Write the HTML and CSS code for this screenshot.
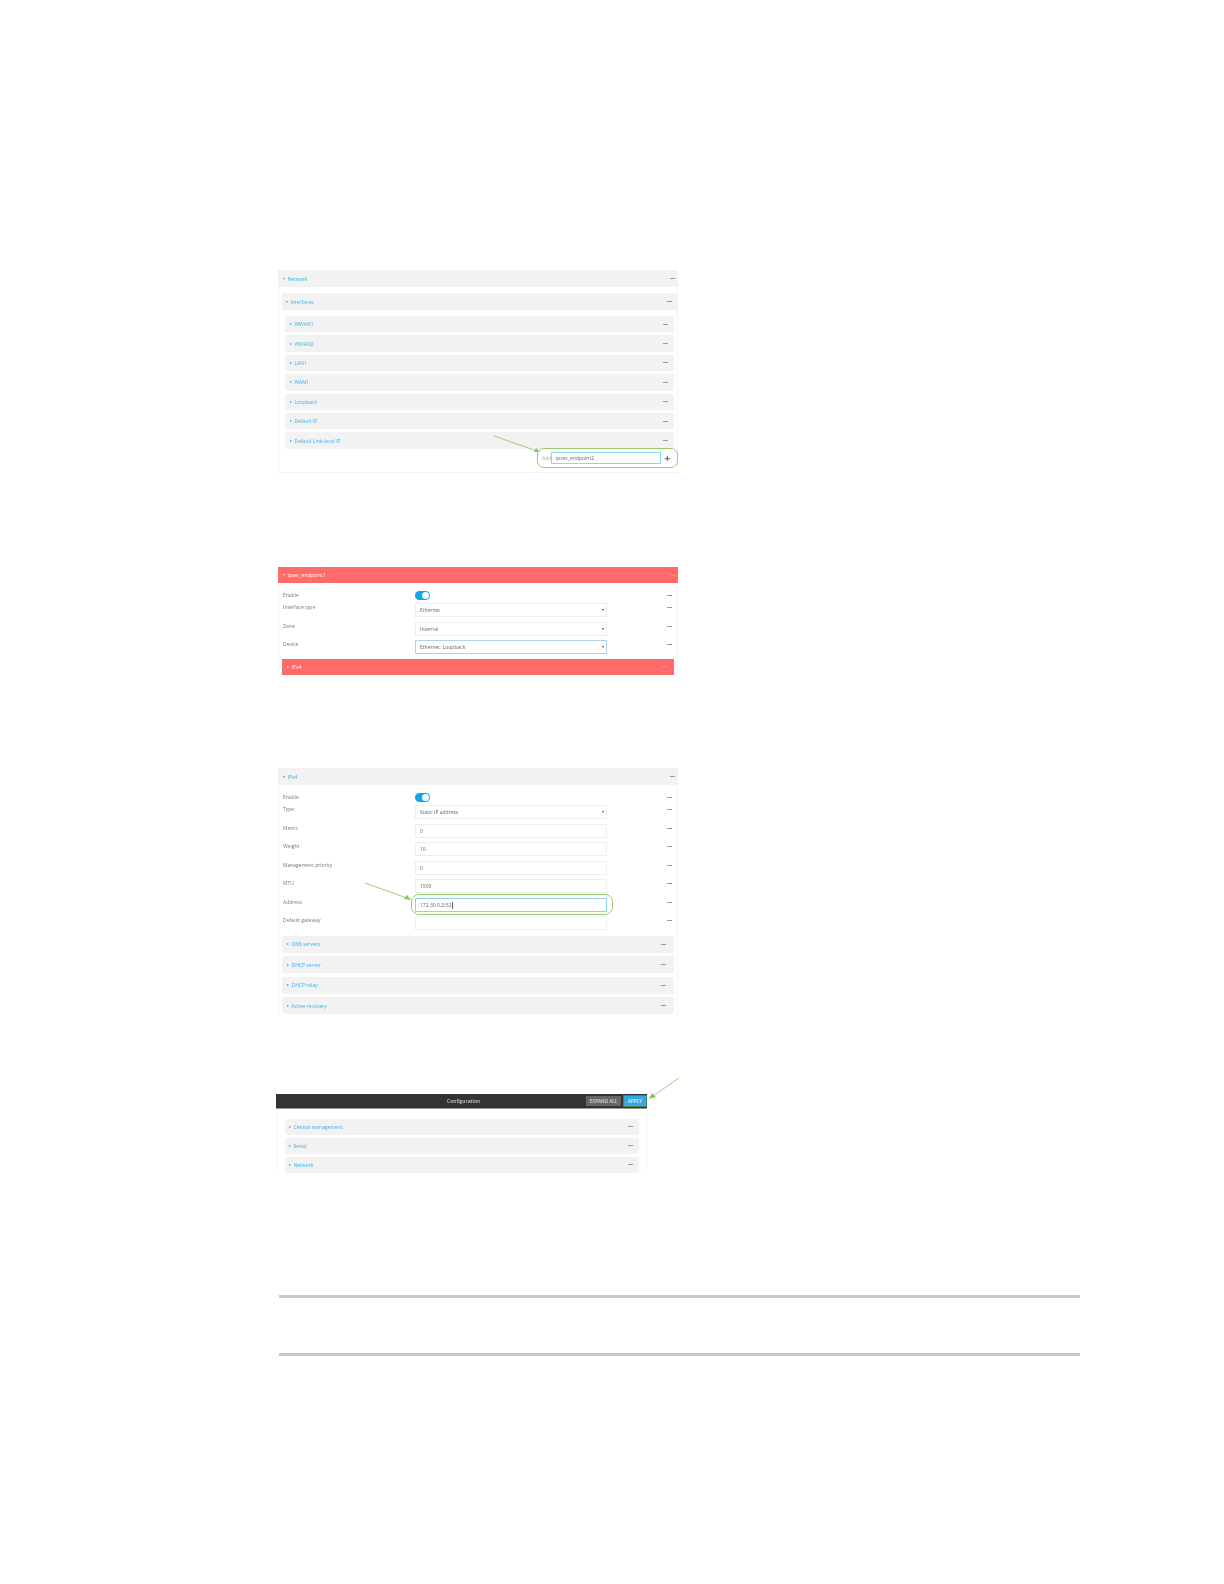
FILE: index.html
```html
<!DOCTYPE html>
<html lang="en">
<head>
  <meta charset="UTF-8" />
  <title>IPsec endpoint configuration</title>
  <link rel="stylesheet" href="styles.css">
</head>
<body>
  <main class="page">

    <!-- Add interface -->
    <section class="shot shot-add">
      <div class="bar bar-top"><span class="title"><i class="tri down"></i>Network</span><i class="dash"></i></div>
      <div class="panel">
        <div class="bar bar-sub"><span class="title"><i class="tri down"></i>Interfaces</span><i class="dash"></i></div>
        <div class="rows">
          <div class="bar bar-row"><span class="title"><i class="tri"></i>WWAN1</span><i class="dash"></i></div>
          <div class="bar bar-row"><span class="title"><i class="tri"></i>WWAN2</span><i class="dash"></i></div>
          <div class="bar bar-row"><span class="title"><i class="tri"></i>LAN1</span><i class="dash"></i></div>
          <div class="bar bar-row"><span class="title"><i class="tri"></i>WAN1</span><i class="dash"></i></div>
          <div class="bar bar-row"><span class="title"><i class="tri"></i>Loopback</span><i class="dash"></i></div>
          <div class="bar bar-row"><span class="title"><i class="tri"></i>Default IP</span><i class="dash"></i></div>
          <div class="bar bar-row"><span class="title"><i class="tri"></i>Default Link-local IP</span><i class="dash"></i></div>
        </div>
        <div class="add-line">
          <div class="add-box">
            <span class="add-label">Add</span>
            <span class="input focus add-input">ipsec_endpoint2</span>
            <span class="plus">+</span>
          </div>
        </div>
      </div>
      <svg class="arrow arrow-add" width="60" height="30" viewBox="0 0 60 30"><path d="M2 2 L45 17" /><path class="head" d="M48 18 L42 18 L44 14 Z" /></svg>
    </section>

    <!-- Interface settings -->
    <section class="shot shot-iface">
      <div class="bar bar-red"><span class="title"><i class="tri down"></i>ipsec_endpoint1</span><i class="dash"></i></div>
      <div class="form">
        <div class="field field-toggle"><label>Enable</label><span class="toggle"></span><i class="dash"></i></div>
        <div class="field"><label>Interface type</label><span class="input select">Ethernet</span><i class="dash"></i></div>
        <div class="field"><label>Zone</label><span class="input select">Internal</span><i class="dash"></i></div>
        <div class="field"><label>Device</label><span class="input select focus-soft">Ethernet: Loopback</span><i class="dash"></i></div>
      </div>
      <div class="bar bar-red bar-red-sub"><span class="title"><i class="tri"></i>IPv4</span><i class="dash"></i></div>
    </section>

    <!-- IPv4 settings -->
    <section class="shot shot-ipv4">
      <div class="bar bar-top"><span class="title"><i class="tri down"></i>IPv4</span><i class="dash"></i></div>
      <div class="form">
        <div class="field field-toggle"><label>Enable</label><span class="toggle"></span><i class="dash"></i></div>
        <div class="field"><label>Type</label><span class="input select">Static IP address</span><i class="dash"></i></div>
        <div class="field"><label>Metric</label><span class="input">0</span><i class="dash"></i></div>
        <div class="field"><label>Weight</label><span class="input">10</span><i class="dash"></i></div>
        <div class="field"><label>Management priority</label><span class="input">0</span><i class="dash"></i></div>
        <div class="field"><label>MTU</label><span class="input">1500</span><i class="dash"></i></div>
        <div class="field"><label>Address</label><span class="input focus">172.30.0.2/32<b class="caret"></b></span><i class="dash"></i></div>
        <div class="field"><label>Default gateway</label><span class="input"></span><i class="dash"></i></div>
      </div>
      <div class="groups">
        <div class="bar bar-group"><span class="title"><i class="tri"></i>DNS servers</span><i class="dash"></i></div>
        <div class="bar bar-group"><span class="title"><i class="tri"></i>DHCP server</span><i class="dash"></i></div>
        <div class="bar bar-group"><span class="title"><i class="tri"></i>DHCP relay</span><i class="dash"></i></div>
        <div class="bar bar-group"><span class="title"><i class="tri"></i>Active recovery</span><i class="dash"></i></div>
      </div>
      <span class="ring ring-address"></span>
      <svg class="arrow arrow-address" width="90" height="30" viewBox="0 0 90 30"><path d="M2 2 L44 17" /><path class="head" d="M48 19 L41 18 L44 14 Z" /></svg>
    </section>

    <!-- Apply -->
    <section class="shot shot-apply">
      <div class="config-bar">
        <span class="config-title">Configuration</span>
        <span class="btn btn-expand">EXPAND ALL</span>
        <span class="btn btn-apply">APPLY</span>
      </div>
      <div class="config-list">
        <div class="bar bar-config"><span class="title"><i class="tri"></i>Central management</span><i class="dash"></i></div>
        <div class="bar bar-config"><span class="title"><i class="tri"></i>Serial</span><i class="dash"></i></div>
        <div class="bar bar-config"><span class="title"><i class="tri"></i>Network</span><i class="dash"></i></div>
      </div>
      <svg class="arrow arrow-apply" width="34" height="30" viewBox="0 0 34 30"><path d="M32 2 L6 20" /><path class="head" d="M2 23 L5 17 L9 21 Z" /></svg>
    </section>

    <div class="note">
      <hr class="rule">
      <hr class="rule">
    </div>

  </main>
</body>
</html>
```

FILE: styles.css
```css
body {
  margin: 0;
  background: #fff;
  font-family: "Open Sans", "Liberation Sans", sans-serif;
  color: #777;
}
.page {
  width: 1224px;
  height: 1584px;
  overflow: hidden;
  padding-top: 270px;
  box-sizing: border-box;
}
.shot {
  position: relative;
  box-sizing: border-box;
  font-size: 5px;
  border: solid #f3f3f3;
  border-width: 0 1px;
  filter: blur(0.3px);
}
.shot-add {
  width: 400px;
  height: 203px;
  margin-left: 278px;
  border-bottom-width: 1px;
}
.shot-iface {
  width: 400px;
  height: 107px;
  margin: 94px 0 0 278px;
}
.shot-ipv4 {
  width: 400px;
  height: 249px;
  margin: 94px 0 0 278px;
}
.shot-apply {
  width: 371px;
  height: 76px;
  margin: 77px 0 0 276px;
}

/* section bars */
.bar {
  display: flex;
  align-items: center;
  justify-content: space-between;
  box-sizing: border-box;
  background: #f2f2f2;
  height: 17px;
  padding: 0 2px 0 4px;
}
.bar-top,
.bar-red {
  margin: 0 -1px;
  padding: 0 3px 0 5px;
}
.title {
  display: flex;
  align-items: center;
  gap: 2.5px;
  color: #35b2e8;
}
.tri {
  width: 0;
  height: 0;
  border-left: 2.5px solid #35a5d8;
  border-top: 1.5px solid transparent;
  border-bottom: 1.5px solid transparent;
}
.tri.down {
  border-left: 1.5px solid transparent;
  border-right: 1.5px solid transparent;
  border-top: 2.5px solid #35a5d8;
  border-bottom: 0;
}
.dash {
  width: 5px;
  height: 1px;
  background: #999;
}
.panel {
  margin: 6px 0 0 3px;
  height: 179px;
}
.bar-sub {
  border-radius: 2px 2px 0 0;
  padding-right: 5px;
}
.rows {
  display: flex;
  flex-direction: column;
  gap: 3px;
  margin: 6px 3px 0 3px;
}
.bar-row {
  height: 16.4px;
  padding: 0 6px 0 5px;
  border-radius: 2px;
}

/* add field */
.add-line {
  display: flex;
  justify-content: flex-end;
  margin-right: -1px;
}
.add-box {
  display: flex;
  align-items: center;
  box-sizing: border-box;
  width: 141px;
  height: 20px;
  padding-left: 4px;
  border: 1px solid #9ccb6e;
  border-radius: 7px;
  margin-top: -1px;
  background: #fff;
}
.add-label {
  width: 9px;
  color: #aaa;
}
.input {
  display: block;
  flex-shrink: 0;
  box-sizing: border-box;
  width: 192px;
  height: 14px;
  line-height: 12px;
  padding-left: 4px;
  border: 1px solid #eee;
  background: #fff;
  color: #666;
}
.add-input {
  width: 110px;
  height: 12px;
  line-height: 10px;
}
.focus {
  border-color: #8fd3ee;
}
.focus-soft {
  border-color: #b5cfe8;
}
.plus {
  margin-left: 1px;
  width: 11px;
  text-align: center;
  font-size: 11px;
  font-weight: 700;
  line-height: 10px;
  color: #777;
}

/* forms */
.bar-red {
  background: #ff6b6b;
  height: 16px;
}
.bar-red .title {
  color: #fff;
}
.bar-red .tri {
  border-left-color: #fff;
}
.bar-red .tri.down {
  border-left-color: transparent;
  border-top-color: #fff;
}
.bar-red .dash {
  background: #ff8c8c;
}
.bar-red-sub {
  margin: 0 3px;
  padding: 0 7px 0 5px;
}
.form {
  display: flex;
  flex-direction: column;
  padding: 8px 5px 0 4px;
}
.field {
  display: flex;
  align-items: flex-start;
  height: 18.5px;
}
.field label {
  width: 132px;
  flex-shrink: 0;
  line-height: 8px;
}
.field .dash {
  margin: 4px 0 0 auto;
}
.field-toggle {
  height: 12px;
}
.toggle {
  position: relative;
  display: block;
  width: 15px;
  height: 9px;
  border-radius: 5px;
  background: #0fa9ea;
}
.toggle::after {
  content: "";
  position: absolute;
  right: 1px;
  top: 1px;
  width: 7px;
  height: 7px;
  border-radius: 50%;
  background: #fff;
}
.select {
  position: relative;
}
.select::after {
  content: "";
  position: absolute;
  right: 2px;
  top: 5px;
  border-left: 1.5px solid transparent;
  border-right: 1.5px solid transparent;
  border-top: 2.5px solid #444;
}
.caret {
  display: inline-block;
  width: 1px;
  height: 7px;
  background: #666;
  vertical-align: middle;
}
.groups {
  display: flex;
  flex-direction: column;
  gap: 3.5px;
  margin: 1px 3px 0;
}
.bar-group {
  padding: 0 8px 0 5px;
  border-radius: 2px;
}

/* apply bar */
.config-bar {
  display: flex;
  align-items: center;
  justify-content: flex-end;
  height: 14px;
  margin: 0 -1px;
  background: #333;
  border-bottom: 1px solid #999;
  position: relative;
}
.config-title {
  position: absolute;
  left: 171px;
  color: #ccc;
  font-weight: 600;
}
.btn {
  display: block;
  height: 10px;
  line-height: 10px;
  text-align: center;
  color: #ddd;
  font-weight: 600;
  font-size: 4.6px;
}
.btn-expand {
  width: 35px;
  background: #666;
}
.btn-apply {
  width: 22px;
  margin-left: 3px;
  margin-right: 1px;
  background: #30a9e6;
  color: #e8f6fc;
  outline: 1px solid #5c7f4a;
}
.config-list {
  display: flex;
  flex-direction: column;
  gap: 3.5px;
  margin: 10px 7px 0 8px;
}
.bar-config {
  height: 15.5px;
  padding: 0 6px 0 4px;
  border-radius: 2px;
}

/* callouts */
.arrow {
  position: absolute;
  overflow: visible;
}
.arrow path {
  fill: none;
  stroke: #8cbf5a;
  stroke-width: 0.8;
}
.arrow .head {
  fill: #8cbf5a;
  stroke: none;
}
.arrow-add {
  left: 213px;
  top: 164px;
}
.arrow-address {
  left: 84px;
  top: 113px;
}
.arrow-apply {
  left: 370px;
  top: -18px;
}
.ring {
  position: absolute;
  border: 1px solid #9ccb6e;
  border-radius: 8px;
}
.ring-address {
  left: 132px;
  top: 126px;
  width: 200px;
  height: 19px;
}

/* note rules */
.note {
  width: 801px;
  margin: 125px 0 0 279px;
}
.rule {
  height: 3px;
  margin: 0 0 55px;
  border: 0;
  background: #c8c8c8;
}
```
